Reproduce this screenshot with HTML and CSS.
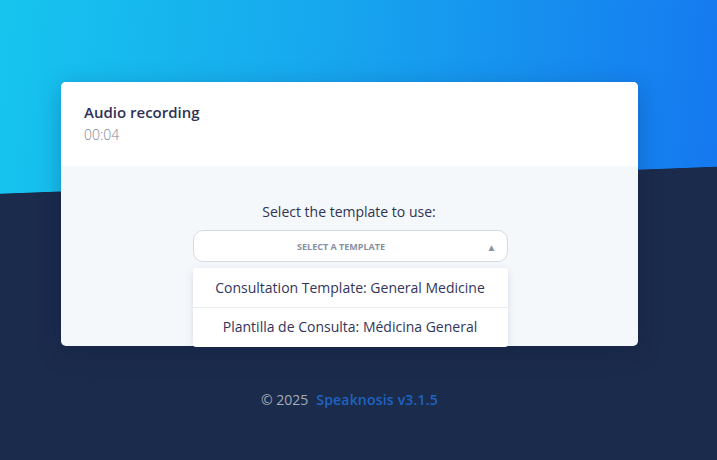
FILE: index.html
```html
<!DOCTYPE html>
<html lang="en">
<head>
<meta charset="utf-8">
<title>Audio recording</title>
<link rel="stylesheet" href="styles.css">
</head>
<body>
<div class="page">
  <div class="card">
    <div class="card-header">
      <div class="title">Audio recording</div>
      <div class="time">00:04</div>
    </div>
    <div class="card-body">
      <div class="label">Select the template to use:</div>
      <div class="select-wrap">
        <div class="select">
          <span class="select-text">SELECT A TEMPLATE</span>
          <span class="caret">&#9650;</span>
        </div>
        <ul class="menu">
          <li class="menu-item">Consultation Template: General Medicine</li>
          <li class="menu-item">Plantilla de Consulta: Médicina General</li>
        </ul>
      </div>
    </div>
  </div>
  <footer class="footer">
    <span class="copy">© 2025</span>
    <span class="brand">Speaknosis v3.1.5</span>
  </footer>
</div>
</body>
</html>
```
FILE: styles.css
```css
* { box-sizing: border-box; }
html, body { margin: 0; padding: 0; }
body {
  font-family: "Open Sans", "Noto Sans", sans-serif;
  background: #1b2b4c;
}
.page {
  min-height: 460px;
  padding: 82px 18px 0 0;
  display: flex;
  flex-direction: column;
  align-items: center;
  background:
    linear-gradient(177.84deg, rgba(27,43,76,0) 193.2px, #1b2b4c 194px) top left / 100% 200px no-repeat,
    linear-gradient(97deg, #16c5ee 0%, #17a9ee 42%, #1578f0 100%) top left / 100% 200px no-repeat,
    #1b2b4c;
}
.card {
  width: 577px;
  border-radius: 5px;
  background: #f5f8fb;
  box-shadow: 0 6px 24px rgba(10, 25, 60, 0.25);
}
.card-header {
  background: #fff;
  border-radius: 5px 5px 0 0;
  height: 84px;
  padding: 19px 23px 0;
}
.title {
  font-size: 15px;
  font-weight: 600;
  color: #303254;
  line-height: 22px;
}
.time {
  font-size: 14px;
  font-weight: 300;
  color: #7e8491;
  line-height: 20px;
  margin-top: 2px;
}
.card-body {
  height: 180px;
  padding-top: 36px;
  display: flex;
  flex-direction: column;
  align-items: center;
}
.label {
  font-size: 14px;
  font-weight: 500;
  color: #2f3352;
  line-height: 20px;
  margin-right: 1px;
}
.select-wrap {
  position: relative;
  margin-top: 8px;
  width: 315px;
  margin-left: 1px;
}
.select {
  height: 32px;
  background: #fff;
  border: 1px solid #d6dbe3;
  border-radius: 10px;
  display: flex;
  align-items: center;
  justify-content: center;
  position: relative;
}
.select-text {
  font-size: 9px;
  font-weight: 700;
  color: #8690a0;
  margin-right: 18px;
}
.caret {
  position: absolute;
  right: 10px;
  top: 9px;
  font-size: 10px;
  color: #8a93a4;
}
.menu {
  position: absolute;
  top: 38px;
  left: 0;
  right: 0;
  margin: 0;
  padding: 0;
  list-style: none;
  background: #fff;
  border-radius: 3px;
  box-shadow: 0 2px 8px rgba(20, 35, 70, 0.12);
}
.menu-item {
  height: 39px;
  line-height: 39px;
  text-align: center;
  font-size: 14px;
  font-weight: 500;
  color: #32355a;
}
.menu-item + .menu-item {
  border-top: 1px solid #e9ecf1;
  height: 40px;
  line-height: 38px;
}
.footer {
  margin-top: 44px;
  font-size: 14px;
  line-height: 20px;
  display: flex;
  gap: 8px;
  margin-right: 0;
}
.copy { color: #a4acbb; }
.brand { color: #1f63c2; font-weight: 600; letter-spacing: 0.2px; }
```
